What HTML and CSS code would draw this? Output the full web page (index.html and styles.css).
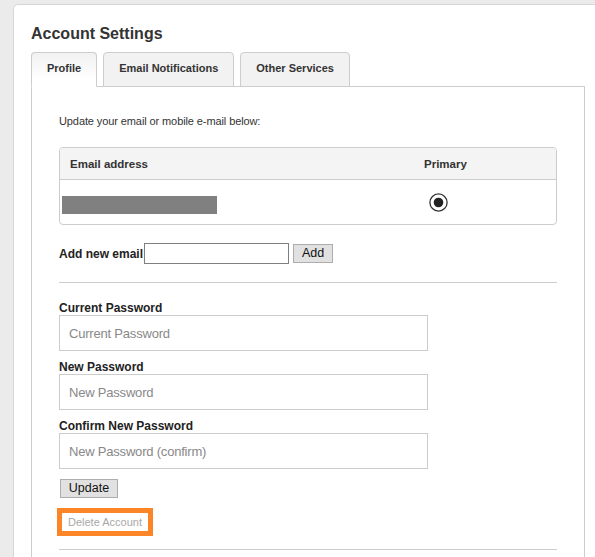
FILE: index.html
```html
<!DOCTYPE html>
<html lang="en">
<head>
<meta charset="utf-8">
<title>Account Settings</title>
<link rel="stylesheet" href="styles.css">
</head>
<body>
<div class="card">
  <h1 class="title">Account Settings</h1>
  <div class="tabs">
    <div class="tab active">Profile</div>
    <div class="tab">Email Notifications</div>
    <div class="tab">Other Services</div>
  </div>
  <div class="panel">
    <p class="intro">Update your email or mobile e-mail below:</p>
    <div class="email-table">
      <div class="et-head">
        <div class="et-cell">Email address</div>
        <div class="et-cell">Primary</div>
      </div>
      <div class="et-row">
        <div class="et-email"><span class="redacted"></span></div>
        <div class="et-cell">
          <svg class="radio" width="19" height="19" viewBox="0 0 19 19" aria-hidden="true">
            <circle cx="9.5" cy="9.5" r="8.6" fill="#fff" stroke="#333" stroke-width="1.3"/>
            <circle cx="9.5" cy="9.5" r="4.8" fill="#222"/>
          </svg>
        </div>
      </div>
    </div>
    <div class="add-row">
      <span class="add-label">Add new email</span>
      <input class="add-input" type="text">
      <button class="btn add-btn" type="button">Add</button>
    </div>
    <div class="rule"></div>
    <form class="pw-form">
      <label class="field-label">Current Password</label>
      <input class="field" type="password" placeholder="Current Password">
      <label class="field-label">New Password</label>
      <input class="field" type="password" placeholder="New Password">
      <label class="field-label">Confirm New Password</label>
      <input class="field" type="password" placeholder="New Password (confirm)">
      <button class="btn update-btn" type="button">Update</button>
    </form>
    <div class="delete-wrap"><a class="delete-link" href="#">Delete Account</a></div>
    <div class="rule bottom-rule"></div>
  </div>
</div>
</body>
</html>
```
FILE: styles.css
```css
html, body {
  margin: 0;
  padding: 0;
}
body {
  background: #ebebeb;
  font-family: "Liberation Sans", Arial, sans-serif;
  color: #333;
  height: 557px;
  overflow: hidden;
}
.card {
  margin: 4px 0 0 13px;
  width: 640px;
  background: #fff;
  border: 1px solid #d6d6d6;
  border-radius: 5px;
  padding: 19px 0 0 17px;
  box-sizing: border-box;
  height: 700px;
}
.title {
  margin: 0;
  font-size: 16px;
  line-height: 20px;
  font-weight: bold;
  color: #333;
}
.tabs {
  display: flex;
  gap: 6px;
  margin-top: 8px;
  position: relative;
  z-index: 1;
  margin-bottom: -1px;
}
.tab {
  font-size: 11px;
  font-weight: bold;
  color: #333;
  line-height: 31px;
  padding: 0 15px 2px;
  border: 1px solid #cdcdcd;
  border-radius: 4px 4px 0 0;
  background: #f2f2f2;
}
.tab.active {
  background: linear-gradient(#f1f1f1, #ffffff 80%);
  border-bottom-color: #fff;
}
.panel {
  width: 554px;
  box-sizing: border-box;
  border: 1px solid #cdcdcd;
  padding: 28px 27px 40px;
}
.intro {
  margin: 0 0 19px;
  font-size: 11px;
  line-height: 13px;
  letter-spacing: -0.1px;
}
.email-table {
  border: 1px solid #cccccc;
  border-radius: 4px;
  overflow: hidden;
}
.et-head {
  display: grid;
  grid-template-columns: 354px 1fr;
  align-items: center;
  height: 31px;
  background: #f4f4f4;
  border-bottom: 1px solid #cccccc;
  font-size: 11.5px;
  font-weight: bold;
}
.et-cell {
  padding-left: 10px;
}
.et-row {
  display: grid;
  grid-template-columns: 354px 1fr;
  align-items: center;
  height: 44px;
}
.et-email {
  align-self: start;
  padding: 16px 0 0 2px;
}
.redacted {
  display: block;
  width: 155px;
  height: 18px;
  background: #808080;
}
.radio {
  display: block;
  margin-left: 5px;
}
.add-row {
  display: flex;
  align-items: center;
  margin-top: 18px;
  height: 21px;
}
.add-label {
  font-size: 12px;
  font-weight: bold;
  color: #222;
}
.add-input {
  box-sizing: border-box;
  width: 145px;
  height: 21px;
  margin: 0 0 0 1px;
  border: 1px solid #7f7f7f;
  padding: 0 3px;
}
.btn {
  box-sizing: border-box;
  background: #e1e1e1;
  border: 1px solid #adadad;
  border-radius: 0;
  font-family: "Liberation Sans", Arial, sans-serif;
  font-size: 12.5px;
  color: #111;
  padding: 0;
  line-height: 17px;
}
.add-btn {
  width: 40px;
  height: 19px;
  margin-left: 4px;
}
.rule {
  border-top: 1px solid #cccccc;
  margin-top: 18px;
}
.pw-form {
  margin: 19px 0 0;
  display: flex;
  flex-direction: column;
  align-items: flex-start;
}
.field-label {
  display: block;
  font-size: 12px;
  line-height: 13px;
  font-weight: bold;
  color: #222;
}
.field {
  box-sizing: border-box;
  width: 369px;
  height: 36px;
  margin: 0 0 10px;
  border: 1px solid #cccccc;
  padding: 0 9px;
  font-family: "Liberation Sans", Arial, sans-serif;
  font-size: 13px;
  letter-spacing: -0.2px;
  color: #333;
}
.field::placeholder {
  color: #888;
  opacity: 1;
}
.update-btn {
  width: 58px;
  height: 19px;
  margin-left: 1px;
}
.delete-wrap {
  margin: 10px 0 0 -2px;
  display: flex;
}
.delete-link {
  display: block;
  border: 5px solid #fb8527;
  padding: 0 6px;
  font-size: 11px;
  line-height: 18px;
  color: #a8a8a8;
  text-decoration: none;
}
.bottom-rule {
  margin-top: 13px;
}
```
